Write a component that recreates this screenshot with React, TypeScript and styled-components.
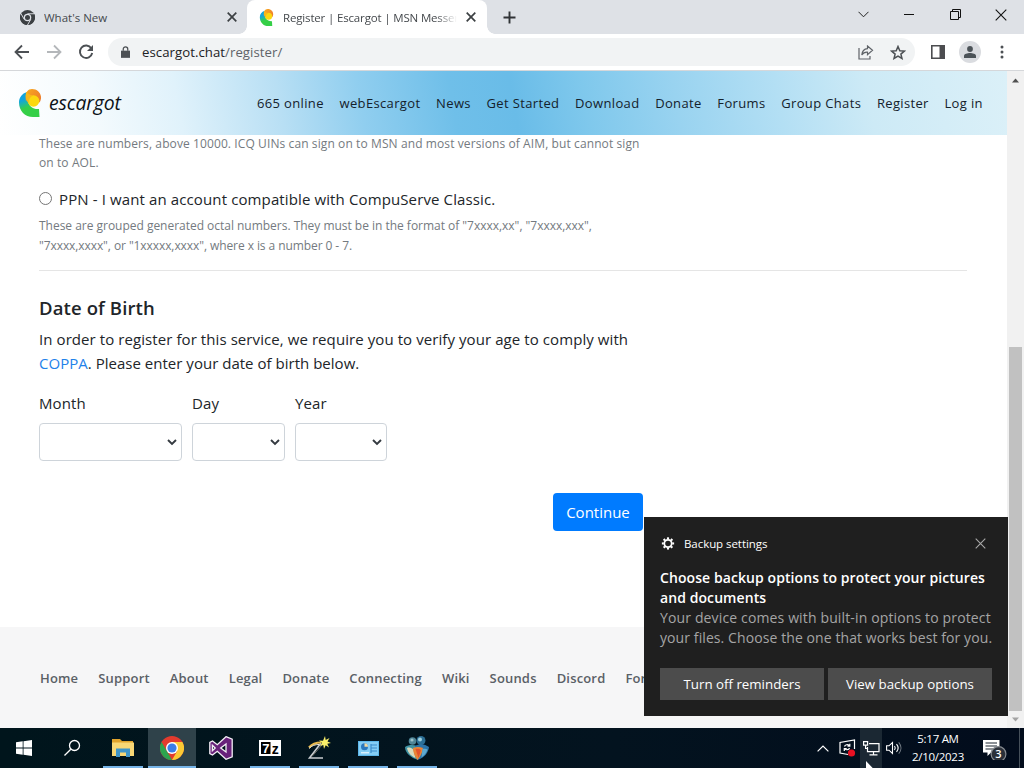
import React from "react";
import styled, { createGlobalStyle, css } from "styled-components";

const GlobalStyle = createGlobalStyle`
  * { box-sizing: border-box; }
  body {
    margin: 0;
    overflow: hidden;
    font-family: "Open Sans", "Noto Sans", sans-serif;
    color: #212529;
  }
  p, h2 { margin: 0; }
`;

const Desktop = styled.div`
  position: relative;
  display: flex;
  flex-direction: column;
  width: 1024px;
  height: 768px;
  overflow: hidden;
  background: #fff;
`;

/* ---------- browser chrome ---------- */

const TabStrip = styled.div`
  display: flex;
  height: 34px;
  flex: none;
  background: #dee1e6;
`;

const Tab = styled.div<{ $active?: boolean }>`
  position: relative;
  display: flex;
  align-items: center;
  width: ${(p) => (p.$active ? 240 : 247)}px;
  padding: ${(p) => (p.$active ? "0 11px 0 12px" : "0 10px 0 20px")};
  font-size: 11.5px;
  color: #45494d;
  ${(p) =>
    p.$active &&
    css`
      background: #fff;
      border-radius: 8px 8px 0 0;
      &::before,
      &::after {
        content: "";
        position: absolute;
        bottom: 0;
        width: 8px;
        height: 8px;
      }
      &::before {
        left: -8px;
        background: radial-gradient(circle at 0 0, transparent 7.5px, #fff 8px);
      }
      &::after {
        right: -8px;
        background: radial-gradient(circle at 100% 0, transparent 7.5px, #fff 8px);
      }
    `}
`;

const TabTitle = styled.span<{ $fade?: boolean }>`
  flex: 1;
  margin-left: 9px;
  overflow: hidden;
  white-space: nowrap;
  ${(p) =>
    p.$fade &&
    css`
      margin-right: 9px;
      letter-spacing: -0.16px;
      mask-image: linear-gradient(to right, #000 88%, transparent);
    `}
`;

const NewTab = styled.div`
  display: flex;
  align-items: center;
  width: 44px;
  padding-left: 16px;
`;

const WindowButtons = styled.div`
  display: flex;
  margin-left: auto;
  height: 29px;
`;

const WindowButton = styled.div`
  display: grid;
  place-items: center;
  width: 46px;
`;

const Toolbar = styled.div`
  display: flex;
  align-items: center;
  height: 37px;
  flex: none;
  padding: 0 15px 0 14px;
  border-bottom: 1px solid #d5d7da;
`;

const NavIcons = styled.div`
  display: flex;
  gap: 16px;
  margin-right: 14px;
`;

const AddressBar = styled.div`
  display: flex;
  align-items: center;
  flex: 1;
  height: 28px;
  padding: 0 9px 0 13px;
  border-radius: 14px;
  background: #f1f3f4;
  font-size: 13.2px;
  letter-spacing: 0.05px;
  color: #202124;
`;

const LockIcon = styled.svg`
  margin-right: 12px;
`;

const UrlPath = styled.span`
  flex: 1;
  color: #5f6368;
`;

const BarIcons = styled.div`
  display: flex;
  gap: 16px;
  align-items: center;
`;

const ToolIcons = styled.div`
  display: flex;
  align-items: center;
  gap: 14px;
  margin-left: 16px;
`;

const Avatar = styled.div`
  display: grid;
  place-items: center;
  width: 22px;
  height: 22px;
  border-radius: 50%;
  background: #dadce0;
`;

/* ---------- page ---------- */

const Viewport = styled.div`
  display: flex;
  flex: none;
  height: 657px;
`;

const Page = styled.div`
  display: flex;
  flex-direction: column;
  width: 1007px;
  overflow: hidden;
`;

const SiteNav = styled.div`
  display: flex;
  align-items: center;
  flex: none;
  height: 64px;
  padding: 0 24px 0 19px;
  background: linear-gradient(
    80deg,
    #fff 0%,
    #f3fafd 10%,
    #e0f2fb 18%,
    #b8dff4 28%,
    #90ceef 36%,
    #6fbfe9 45%,
    #69bce8 51%,
    #7fc8ec 58%,
    #99d3f0 67%,
    #b3dff4 77%,
    #cdeaf6 86%,
    #dbf0f8 100%
  );
`;

const Brand = styled.div`
  display: flex;
  align-items: center;
  gap: 8px;
  width: 238px;
  font-size: 19.4px;
  font-style: italic;
  color: #0b1218;
`;

const BrandName = styled.span`
  margin-top: -2px;
  letter-spacing: -0.12px;
`;

const NavLinks = styled.div`
  display: flex;
  flex: 1;
  justify-content: space-between;
  font-size: 13px;
  letter-spacing: 0.35px;
  color: #14212b;
  white-space: nowrap;
`;

const Content = styled.div`
  flex: none;
  height: 492px;
  padding: 0 40px 0 39px;
  white-space: nowrap;
`;

const Line = styled.span<{ $spacing: number }>`
  display: block;
  letter-spacing: ${(p) => p.$spacing}px;
`;

const Hint = styled.p<{ $first?: boolean }>`
  margin-top: ${(p) => (p.$first ? -1 : 0)}px;
  font-size: 12px;
  line-height: ${(p) => (p.$first ? 19 : 19.5)}px;
  color: #747a80;
`;

const RadioRow = styled.div`
  display: flex;
  align-items: center;
  height: 24px;
  margin: 15px 0 5px;
  font-size: 15px;
  letter-spacing: 0.12px;
`;

const Radio = styled.span`
  width: 13px;
  height: 13px;
  margin: -1px 7px 0 0;
  border: 1px solid #767676;
  border-radius: 50%;
`;

const Divider = styled.div`
  height: 1px;
  margin: 15px 0 25px;
  background: #e5e5e5;
`;

const Heading = styled.h2`
  font-size: 18.5px;
  font-weight: 600;
  line-height: 24px;
  letter-spacing: 0.12px;
  margin-bottom: 7px;
`;

const Paragraph = styled.p`
  font-size: 15px;
  line-height: 24px;
`;

const Link = styled.a`
  color: #1f82ea;
`;

const DateFields = styled.div`
  display: grid;
  grid-template-columns: 143px 93px 92px;
  gap: 10px;
  margin-top: 16px;
`;

const Field = styled.label`
  display: flex;
  flex-direction: column;
  gap: 8px;
  font-size: 15px;
  line-height: 24px;
  letter-spacing: 0.1px;
`;

const SelectBox = styled.div`
  display: flex;
  align-items: center;
  justify-content: flex-end;
  height: 38px;
  padding-right: 4px;
  border: 1px solid #ced4da;
  border-radius: 4px;
`;

const ContinueButton = styled.button`
  display: block;
  width: 90px;
  height: 38px;
  margin: 32px 0 0 514px;
  padding: 0;
  border: 0;
  border-radius: 4px;
  background: #007bff;
  color: #fff;
  font-family: inherit;
  font-size: 15px;
`;

const Footer = styled.div`
  display: flex;
  gap: 20px;
  flex: 1;
  padding: 41px 0 0 40px;
  background: #f6f6f7;
  font-size: 13px;
  font-weight: 600;
  line-height: 20px;
  letter-spacing: 0.17px;
  color: #5a6066;
  white-space: nowrap;
`;

const Scrollbar = styled.div`
  display: flex;
  flex-direction: column;
  align-items: center;
  width: 17px;
  background: #f1f1f1;
  padding-top: 7px;
`;

const Thumb = styled.div`
  width: 13px;
  height: 364px;
  margin: 264px 0 6px;
  background: #c1c1c1;
`;

/* ---------- notification ---------- */

const Toast = styled.div`
  position: absolute;
  left: 644px;
  top: 517px;
  width: 364px;
  height: 199px;
  padding: 16px;
  background: #1f1f1f;
  color: #fff;
  white-space: nowrap;
`;

const ToastHeader = styled.div`
  display: flex;
  align-items: center;
  height: 20px;
  padding: 0 6px 0 1px;
  font-size: 11.5px;
  letter-spacing: -0.06px;
`;

const ToastApp = styled.span`
  flex: 1;
  margin-left: 9px;
`;

const ToastTitle = styled.p`
  margin-top: 15px;
  font-size: 14px;
  font-weight: 600;
  line-height: 20px;
  letter-spacing: 0.08px;
`;

const ToastBody = styled.p`
  font-size: 14px;
  line-height: 20px;
  color: #a5a5a5;
`;

const ToastActions = styled.div`
  display: grid;
  grid-template-columns: 1fr 1fr;
  gap: 4px;
  margin-top: 20px;
`;

const ToastButton = styled.div`
  height: 32px;
  background: #4c4c4c;
  font-size: 13.3px;
  line-height: 32px;
  text-align: center;
`;

/* ---------- taskbar ---------- */

const Taskbar = styled.div`
  display: flex;
  flex: none;
  height: 40px;
  background: linear-gradient(to right, #00151c, #03131f 60%, #020c1c);
  color: #fff;
`;

const AppList = styled.div`
  display: flex;
  gap: 1px;
  margin-left: 3px;
`;

const TaskItem = styled.div<{ $open?: boolean; $active?: boolean }>`
  position: relative;
  display: grid;
  place-items: center;
  width: 48px;
  height: 40px;
  background: ${(p) => (p.$active ? "#2f424a" : "transparent")};
  ${(p) =>
    p.$open &&
    css`
      &::after {
        content: "";
        position: absolute;
        left: ${p.$active ? 0 : 4}px;
        right: ${p.$active ? 0 : 4}px;
        bottom: 0;
        height: 2px;
        background: #76b4e8;
      }
    `}
`;

const Tray = styled.div`
  display: flex;
  align-items: center;
  margin-left: auto;
`;

const TrayIcon = styled.div<{ $width: number; $hover?: boolean }>`
  display: grid;
  place-items: center;
  width: ${(p) => p.$width}px;
  height: 40px;
  background: ${(p) => (p.$hover ? "#1b2833" : "transparent")};
`;

const Clock = styled.div`
  width: 64px;
  font-size: 11.5px;
  line-height: 18px;
  text-align: center;
  letter-spacing: -0.28px;
  white-space: nowrap;
`;

const ShowDesktop = styled.div`
  width: 5px;
  height: 40px;
  border-left: 1px solid #46505a;
`;

const Cursor = styled.svg`
  position: absolute;
  left: 865px;
  top: 761px;
`;

/* ---------- drawings ---------- */

const EscargotLogo = ({ width, height }: { width: number; height: number }) => (
  <svg width={width} height={height} viewBox="0 0 22 28">
    <defs>
      <linearGradient id="shell" x1="0" y1="0" x2="0.3" y2="1">
        <stop offset="0.35" stopColor="#12a5dd" />
        <stop offset="0.5" stopColor="#22b8a0" />
        <stop offset="0.68" stopColor="#35cf47" />
      </linearGradient>
      <linearGradient id="crest" x1="0" y1="0" x2="1" y2="0.6">
        <stop offset="0" stopColor="#f9ac1c" />
        <stop offset="1" stopColor="#ee7f2c" />
      </linearGradient>
    </defs>
    <path d="M8 3C3 4.500 0 8.500 0 13.500 0 22 6 28 14 28h6.500l-.5-8c-6 .5-10.500-3-11-8.500z" fill="url(#shell)" />
    <path d="M7 12C5.500 5 8 0 13 0c5.500 0 9.500 4.500 9 9.500-.2 1.500-.8 3-1.500 4L12 8z" fill="url(#crest)" />
    <circle cx="14.500" cy="12" r="5.800" fill="#fbd80f" />
    <path d="M7.500 2.700C6 7 7 11 9.500 14 10 10 11 8 14 6.500 11 6 9 5 7.500 2.700z" fill="#f7b81a" />
  </svg>
);

const ChromeLogo = ({ mono, size }: { mono?: boolean; size: number }) => (
  <svg width={size} height={size} viewBox="0 0 24 24">
    <circle cx="12" cy="12" r="12" fill={mono ? "#3c4043" : "#e33b2e"} />
    <path d="M1.600 6 6.800 15 12 24A12 12 0 0 1 1.600 6z" fill={mono ? "#3c4043" : "#2da44e"} />
    <path d="M22.400 6H12l5.200 9L12 24A12 12 0 0 0 22.400 6z" fill={mono ? "#3c4043" : "#fcc934"} />
    {mono && (
      <path d="M1.600 6l5.200 9M22.400 6H12M12 24l5.200-9" stroke="#dee1e6" strokeWidth="1.500" />
    )}
    <circle cx="12" cy="12" r="6" fill={mono ? "#dee1e6" : "#fff"} />
    <circle cx="12" cy="12" r={mono ? 4 : 4.6} fill={mono ? "#3c4043" : "#3b7de8"} />
  </svg>
);

const Cross = ({ size, color, stroke }: { size: number; color: string; stroke: number }) => (
  <svg width={size} height={size} viewBox={`0 0 ${size} ${size}`}>
    <path
      d={`M.7.7 ${size - 0.7} ${size - 0.7}M${size - 0.7} .7.7 ${size - 0.7}`}
      stroke={color}
      strokeWidth={stroke}
    />
  </svg>
);

const Arrow = ({ color, flip }: { color: string; flip?: boolean }) => (
  <svg width="16" height="16" viewBox="0 0 16 16" fill="none" stroke={color} strokeWidth="1.800">
    <path d={flip ? "M1 8h13M8 1.500 14.500 8 8 14.500" : "M15 8H2M8 1.500 1.500 8 8 14.500"} />
  </svg>
);

const SelectArrow = () => (
  <svg width="10" height="7" viewBox="0 0 10 7" fill="none" stroke="#343a40" strokeWidth="1.900">
    <path d="M1 1l4 4 4-4" />
  </svg>
);

const ExplorerIcon = () => (
  <svg width="22" height="18" viewBox="0 0 22 18">
    <path d="M0 0h8l2 2h11v14H0z" fill="#e0a32c" />
    <path d="M0 3.500h22V17H0z" fill="#f8d775" />
    <path d="M4 9.500h14V18h-4v-4.500H8V18H4z" fill="#3f95c9" />
  </svg>
);

const VisualStudioIcon = () => (
  <svg width="24" height="24" viewBox="0 0 24 24">
    <path
      d="M17 .7 23.200 3.200V20.800L17 23.300 8.300 15.300 3.500 19 .8 17.700V6.300L3.500 5 8.300 8.700zM17 8l-5.300 4 5.300 4zM3.400 9.300v5.400L6.200 12z"
      fill="#68217a"
      fillRule="evenodd"
      stroke="#f3eef5"
      strokeWidth="1.300"
    />
  </svg>
);

const ArchiveText = styled.text`
  font-family: "Liberation Sans", sans-serif;
  font-weight: 700;
`;

const SevenZipIcon = () => (
  <svg width="22" height="16" viewBox="0 0 22 16">
    <path d="M0 0h22v16H0z" fill="#fff" />
    <path d="M2 2h9.500v12H2z" fill="#000" />
    <ArchiveText x="3.200" y="12.500" fontSize="13" fill="#fff">7</ArchiveText>
    <ArchiveText x="12.700" y="13.500" fontSize="14" fill="#000">z</ArchiveText>
  </svg>
);

const WandIcon = () => (
  <svg width="24" height="24" viewBox="0 0 24 24" fill="none">
    <path d="M14 7 2.500 22H16" stroke="#c9ccd0" strokeWidth="1.600" />
    <path d="M15 9 5 20.500" stroke="#6b6b62" strokeWidth="1" />
    <path d="M2 11.500C5 8 9 6.500 14 6.500" stroke="#e9b94e" strokeWidth="2.200" />
    <path d="M2 12.500C5 9.500 8 8.500 12 8.500" stroke="#f6efdc" strokeWidth="1" />
    <path d="M18 0l.7 4L22.500 2 20.500 5.500 24 7l-3.700.8 1.700 3.700-3.300-2.200L17 13l-.7-4-3.300 1 2-3-3-2.500 4 .3z" fill="#fbf06a" />
  </svg>
);

const ControlPanelIcon = () => (
  <svg width="21" height="15" viewBox="0 0 21 15">
    <path d="M0 0h21v15H0z" fill="#5db7ea" />
    <path d="M1 1h19v13H1z" fill="#84cdf5" />
    <circle cx="6.500" cy="5.800" r="3.500" fill="#2a78be" />
    <path d="M6.500 5.800V2.300A3.500 3.500 0 0 1 10 5.800z" fill="#f2d9a0" />
    <path d="M12.500 4H19M12.500 7H19M12.500 10H19M13 3v9" stroke="#3b8ccb" strokeWidth="1.200" />
    <path d="M3 11.700h8" stroke="#d8f0fc" strokeWidth="1.500" />
  </svg>
);

const MessengerIcon = () => (
  <svg width="26" height="25" viewBox="0 0 26 25">
    <circle cx="8.500" cy="5" r="3.800" fill="#4f8597" />
    <circle cx="8" cy="4" r="1.600" fill="#9cc3cc" />
    <circle cx="17" cy="4.500" r="4.500" fill="#2c6f96" />
    <circle cx="16" cy="3.500" r="2" fill="#9fcfdc" />
    <path d="M1 11c4-2.500 8-2.500 12-1l1 14C7 22 1 17 1 11z" fill="#3f93a4" />
    <path d="M11 10c5-3 10-2 14 1-.5 5-4.500 11-11.500 13z" fill="#2d74a8" />
    <path d="M3 12c3-1 5 0 6.500 2l2 8C7 20 4 17 3 12z" fill="#d8d9bd" />
    <path d="M9 12c4-1.500 7-1 10 0-.5 5-3 9-5.500 12C11 21 9 16 9 12z" fill="#ea8436" />
    <path d="M11.500 13c2.500-.5 4 0 5.500 1l-2.500 8z" fill="#e2522c" />
    <path d="M18.500 13c2-.5 4 0 5 .5-1 3-3 6-6 8z" fill="#5fa9cf" />
  </svg>
);

const navLinks = [
  "665 online",
  "webEscargot",
  "News",
  "Get Started",
  "Download",
  "Donate",
  "Forums",
  "Group Chats",
  "Register",
  "Log in",
];

const footerLinks = [
  "Home",
  "Support",
  "About",
  "Legal",
  "Donate",
  "Connecting",
  "Wiki",
  "Sounds",
  "Discord",
  "Forums",
];

const BrowserChrome = () => (
  <>
    <TabStrip>
      <Tab>
        <ChromeLogo mono size={15} />
        <TabTitle>What's New</TabTitle>
        <Cross size={10} color="#3c4043" stroke={1.7} />
      </Tab>
      <Tab $active>
        <EscargotLogo width={15} height={17} />
        <TabTitle $fade>Register | Escargot | MSN Messenger</TabTitle>
        <Cross size={10} color="#3c4043" stroke={1.7} />
      </Tab>
      <NewTab>
        <svg width="13" height="13" viewBox="0 0 13 13" stroke="#303336" strokeWidth="1.900">
          <path d="M6.500.5v12M.5 6.500h12" />
        </svg>
      </NewTab>
      <WindowButtons>
        <WindowButton>
          <svg width="11" height="7" viewBox="0 0 11 7" fill="none" stroke="#222">
            <path d="M.5.8l5 5 5-5" />
          </svg>
        </WindowButton>
        <WindowButton>
          <svg width="10" height="1" viewBox="0 0 10 1">
            <path d="M0 0h10v1H0z" fill="#111" />
          </svg>
        </WindowButton>
        <WindowButton>
          <svg width="11" height="11" viewBox="0 0 11 11" fill="none" stroke="#111">
            <path d="M.5 2.500h8v8h-8zM2.500 2.500v-2h8v8h-2" />
          </svg>
        </WindowButton>
        <WindowButton>
          <Cross size={12} color="#111" stroke={1.1} />
        </WindowButton>
      </WindowButtons>
    </TabStrip>
    <Toolbar>
      <NavIcons>
        <Arrow color="#4c5054" />
        <Arrow color="#b4b7ba" flip />
        <svg width="16" height="16" viewBox="0 0 16 16" fill="none" stroke="#4c5054" strokeWidth="1.900">
          <path d="M13.300 4.300A6.200 6.200 0 1 0 14.200 9" />
          <path d="M15 1v6H9z" fill="#4c5054" stroke="none" />
        </svg>
      </NavIcons>
      <AddressBar>
        <LockIcon width="9" height="12" viewBox="0 0 10 13">
          <path d="M0 5h10v8H0z" fill="#4c5054" />
          <path d="M2.500 5V3.200a2.500 2.500 0 0 1 5 0V5" fill="none" stroke="#4c5054" strokeWidth="1.400" />
        </LockIcon>
        escargot.chat<UrlPath>/register/</UrlPath>
        <BarIcons>
          <svg width="16" height="15" viewBox="0 0 16 15" fill="none" stroke="#5f6368" strokeWidth="1.200">
            <path d="M1 3v11h11v-3" />
            <path d="M9.500 1l5 4.300-5 4.300V7.200C6.800 7 5 8 3.800 10c.3-3.500 2.300-6 5.700-6.300z" />
          </svg>
          <svg width="16" height="15" viewBox="0 0 16 15" fill="none" stroke="#4c5054" strokeWidth="1.500">
            <path d="M8 1.500l1.800 4.200 4.600.4-3.500 3 1.100 4.400L8 11.100l-4 2.400 1.100-4.400-3.500-3 4.600-.4z" />
          </svg>
        </BarIcons>
      </AddressBar>
      <ToolIcons>
        <svg width="14" height="14" viewBox="0 0 14 14">
          <path d="M.8.800h12.400v12.400H.8z" fill="none" stroke="#4c4d50" strokeWidth="1.600" />
          <path d="M8.500 0H14v14H8.500z" fill="#4c4d50" />
        </svg>
        <Avatar>
          <svg width="12" height="12" viewBox="0 0 12 12" fill="#4c5358">
            <circle cx="6" cy="3" r="2.900" />
            <path d="M0 12V9.800C0 8 3.500 7 6 7s6 1 6 2.800V12z" />
          </svg>
        </Avatar>
        <svg width="14" height="14" viewBox="0 0 14 14" fill="#4c5054">
          <circle cx="7" cy="2" r="1.500" />
          <circle cx="7" cy="7" r="1.500" />
          <circle cx="7" cy="12" r="1.500" />
        </svg>
      </ToolIcons>
    </Toolbar>
  </>
);

const RegisterPage = () => (
  <Viewport>
    <Page>
      <SiteNav>
        <Brand>
          <EscargotLogo width={22} height={28} />
          <BrandName>escargot</BrandName>
        </Brand>
        <NavLinks>
          {navLinks.map((link) => (
            <span key={link}>{link}</span>
          ))}
        </NavLinks>
      </SiteNav>
      <Content>
        <Hint $first>
          <Line $spacing={0.1}>
            These are numbers, above 10000. ICQ UINs can sign on to MSN and most versions of AIM, but cannot sign
          </Line>
          <Line $spacing={0.1}>on to AOL.</Line>
        </Hint>
        <RadioRow>
          <Radio />
          PPN - I want an account compatible with CompuServe Classic.
        </RadioRow>
        <Hint>
          <Line $spacing={-0.02}>
            These are grouped generated octal numbers. They must be in the format of "7xxxx,xx", "7xxxx,xxx",
          </Line>
          <Line $spacing={-0.08}>"7xxxx,xxxx", or "1xxxxx,xxxx", where x is a number 0 - 7.</Line>
        </Hint>
        <Divider />
        <Heading>Date of Birth</Heading>
        <Paragraph>
          <Line $spacing={0.08}>
            In order to register for this service, we require you to verify your age to comply with
          </Line>
          <Line $spacing={0.02}>
            <Link>COPPA</Link>. Please enter your date of birth below.
          </Line>
        </Paragraph>
        <DateFields>
          {["Month", "Day", "Year"].map((name) => (
            <Field key={name}>
              {name}
              <SelectBox>
                <SelectArrow />
              </SelectBox>
            </Field>
          ))}
        </DateFields>
        <ContinueButton>Continue</ContinueButton>
      </Content>
      <Footer>
        {footerLinks.map((link) => (
          <span key={link}>{link}</span>
        ))}
      </Footer>
    </Page>
    <Scrollbar>
      <svg width="7" height="5" viewBox="0 0 7 5">
        <path d="M0 4.500 3.500.5 7 4.500z" fill="#505050" />
      </svg>
      <Thumb />
      <svg width="7" height="5" viewBox="0 0 7 5">
        <path d="M0 .5h7L3.500 4.500z" fill="#a3a3a3" />
      </svg>
    </Scrollbar>
  </Viewport>
);

const BackupToast = () => (
  <Toast>
    <ToastHeader>
      <svg width="14" height="14" viewBox="-8 -8.500 16 16" fill="none" stroke="#fff">
        <circle r="4.200" strokeWidth="2" />
        {[0, 45, 90, 135, 180, 225, 270, 315].map((a) => (
          <path key={a} d="M0-4.800V-7" strokeWidth="2.400" transform={`rotate(${a})`} />
        ))}
      </svg>
      <ToastApp>Backup settings</ToastApp>
      <Cross size={11} color="#a8a8a8" stroke={1.1} />
    </ToastHeader>
    <ToastTitle>
      Choose backup options to protect your pictures
      <br />
      and documents
    </ToastTitle>
    <ToastBody>
      <Line $spacing={0.14}>Your device comes with built-in options to protect</Line>
      <Line $spacing={0.09}>your files. Choose the one that works best for you.</Line>
    </ToastBody>
    <ToastActions>
      <ToastButton>Turn off reminders</ToastButton>
      <ToastButton>View backup options</ToastButton>
    </ToastActions>
  </Toast>
);

const WindowsTaskbar = () => (
  <Taskbar>
    <TaskItem>
      <svg width="16" height="16" viewBox="0 0 16 16" fill="#fff">
        <path d="M0 2.200 6.700 1.300v6.200H0zM7.500 1.200 16 0v7.500H7.500zM0 8.400h6.700v6.300L0 13.800zM7.500 8.400H16V16l-8.500-1.200z" />
      </svg>
    </TaskItem>
    <TaskItem>
      <svg width="18" height="18" viewBox="0 0 18 18" fill="none" stroke="#fff" strokeWidth="1.300">
        <circle cx="11.500" cy="6.500" r="5" />
        <path d="M7.800 10.200 1.500 16.500" />
      </svg>
    </TaskItem>
    <AppList>
      <TaskItem $open>
        <ExplorerIcon />
      </TaskItem>
      <TaskItem $open $active>
        <ChromeLogo size={24} />
      </TaskItem>
      <TaskItem>
        <VisualStudioIcon />
      </TaskItem>
      <TaskItem $open>
        <SevenZipIcon />
      </TaskItem>
      <TaskItem $open>
        <WandIcon />
      </TaskItem>
      <TaskItem $open>
        <ControlPanelIcon />
      </TaskItem>
      <TaskItem $open>
        <MessengerIcon />
      </TaskItem>
    </AppList>
    <Tray>
      <TrayIcon $width={24}>
        <svg width="12" height="7" viewBox="0 0 12 7" fill="none" stroke="#fff" strokeWidth="1.200">
          <path d="M.6 6.400 6 1l5.400 5.400" />
        </svg>
      </TrayIcon>
      <TrayIcon $width={25}>
        <svg width="17" height="18" viewBox="0 0 17 18" fill="none" stroke="#fff" strokeWidth="1.200">
          <path d="M9 15.500 1 14V3.500L15.500 1v9" />
          <path d="M5.500 7.500C6 5.500 9 5 10.300 6.800M10.800 4.800v2.400H8.500M10.500 9C9.800 11 7.200 11.300 5.800 9.800M5.300 12V9.500h2.400" />
          <circle cx="12.500" cy="14" r="3.600" fill="#e81123" stroke="none" />
        </svg>
      </TrayIcon>
      <TrayIcon $width={22} $hover>
        <svg width="17" height="15" viewBox="0 0 17 15" fill="none" stroke="#fff" strokeWidth="1.200">
          <path d="M6 2.600h10v8H4.500V6M10.500 10.600v3M6.500 13.900h8" />
          <path d="M.6.600h4v3.500h-4zM2.600 4v3.500h2" />
        </svg>
      </TrayIcon>
      <TrayIcon $width={24}>
        <svg width="16" height="14" viewBox="0 0 16 14" fill="none" stroke="#fff" strokeWidth="1.100">
          <path d="M.6 4.800H3L6.500 1.500v11L3 9.200H.6z" />
          <path d="M8.500 5c.9 1.200.9 2.800 0 4M10.500 3.200c2 2.300 2 5.300 0 7.600" />
          <path d="M12.700 1.300c3 3.500 3 8 0 11.400" stroke="#6f7880" />
        </svg>
      </TrayIcon>
      <Clock>
        5:17 AM
        <br />
        2/10/2023
      </Clock>
      <TrayIcon $width={49}>
        <svg width="26" height="24" viewBox="0 0 26 24">
          <path d="M1 4h16.500v12.500H9L5.500 20v-3.500H1z" fill="#fff" />
          <path d="M3.500 7h11.500M3.500 10h11.500M3.500 13h8" stroke="#1b2430" strokeWidth="1.100" />
          <circle cx="16.500" cy="18" r="7.400" fill="#2a3039" stroke="#868b91" strokeWidth="1.200" />
          <text x="16.500" y="22" fontSize="11" fontWeight="600" fill="#fff" textAnchor="middle">3</text>
        </svg>
      </TrayIcon>
      <ShowDesktop />
    </Tray>
  </Taskbar>
);

export default function App() {
  return (
    <Desktop>
      <GlobalStyle />
      <BrowserChrome />
      <RegisterPage />
      <WindowsTaskbar />
      <BackupToast />
      <Cursor width="12" height="18" viewBox="0 0 12 18">
        <path d="M1 0v16l3.500-3.500L7 18l2.500-1-2.500-5.500h5z" fill="#fff" />
      </Cursor>
    </Desktop>
  );
}
